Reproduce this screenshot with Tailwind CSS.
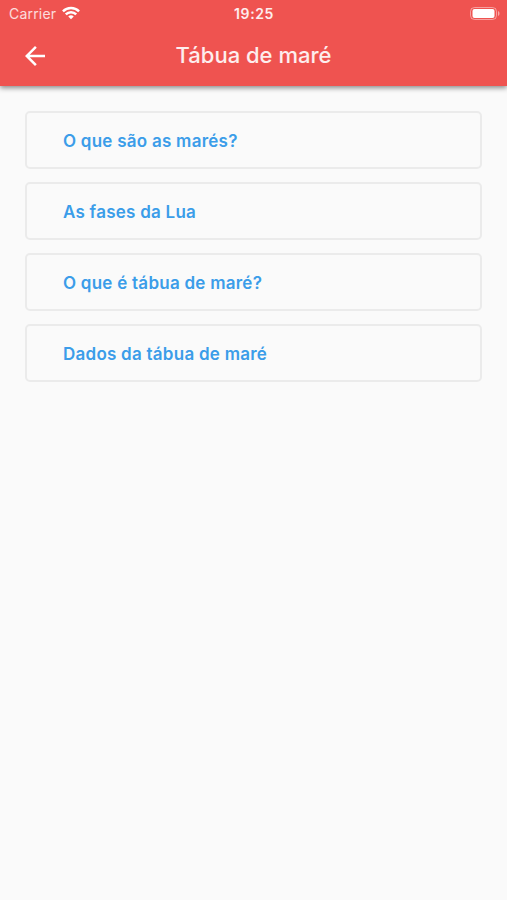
<!DOCTYPE html>
<html lang="pt-BR">

<head>
    <meta charset="UTF-8">
    <meta name="viewport" content="width=device-width, initial-scale=1.0">
    <title>Tábua de maré</title>
    <script src="https://cdn.jsdelivr.net/npm/@tailwindcss/browser@4"></script>
</head>

<body class="min-h-screen bg-[#fafafa] font-['Inter',sans-serif]">
    <!-- Header -->
    <header class="h-[86px] bg-[#ef5350] text-white/90 shadow-[0_2px_5px_rgba(0,0,0,0.45)]">
        <!-- Status bar -->
        <div class="grid grid-cols-3 items-center h-[27px] pl-[8px] pr-[7px]">
            <div class="flex items-center gap-[6px] pl-[1px]">
                <span class="text-[14px] tracking-[0.2px] text-white/80">Carrier</span>
                <svg class="w-[18px] h-[14px] mb-[2px] text-white" viewBox="0 0 19 14" fill="none" stroke="currentColor" stroke-width="2.6">
                    <path d="M1 5.2a12.2 12.2 0 0 1 17 0" />
                    <path d="M4 8.5a7.8 7.8 0 0 1 11 0" />
                    <path d="M9.5 13.6 6.6 10.7a4.2 4.2 0 0 1 5.8 0z" fill="currentColor" stroke="none" />
                </svg>
            </div>
            <span class="text-center text-[14px] font-semibold tracking-[0.6px]">19:25</span>
            <svg class="justify-self-end w-[30px] h-[14px]" viewBox="0 0 30 14">
                <rect x="0.5" y="0.5" width="26" height="12" rx="4" fill="none" stroke="white" stroke-opacity=".45" />
                <rect x="2.5" y="2" width="22" height="9" rx="2" fill="white" />
                <path d="M28 4c2 .8 2 4.2 0 5z" fill="white" fill-opacity=".5" />
            </svg>
        </div>
        <div class="grid grid-cols-[1fr_auto_1fr] items-center h-[57px] px-[25px]">
            <a href="#" aria-label="Voltar" class="text-white">
                <svg class="w-5 h-5" viewBox="4 4 16 16" fill="currentColor">
                    <path d="M20 11H7.83l5.59-5.59L12 4l-8 8 8 8 1.41-1.41L7.83 13H20v-2z" />
                </svg>
            </a>
            <h1 class="text-[22px] font-medium">Tábua de maré</h1>
        </div>
    </header>

    <!-- Topics -->
    <main class="flex flex-col gap-[13px] px-[25px] pt-[25px] text-[17px] font-semibold tracking-[0.25px] text-[#3b9de9]">
        <a href="#" class="flex items-center h-[58px] pl-[36px] pt-[4px] border-2 border-[#ebebeb] rounded-[5px]">O que são as marés?</a>
        <a href="#" class="flex items-center h-[58px] pl-[36px] pt-[4px] border-2 border-[#ebebeb] rounded-[5px]">As fases da Lua</a>
        <a href="#" class="flex items-center h-[58px] pl-[36px] pt-[4px] border-2 border-[#ebebeb] rounded-[5px]">O que é tábua de maré?</a>
        <a href="#" class="flex items-center h-[58px] pl-[36px] pt-[4px] border-2 border-[#ebebeb] rounded-[5px]">Dados da tábua de maré</a>
    </main>
</body>

</html>
